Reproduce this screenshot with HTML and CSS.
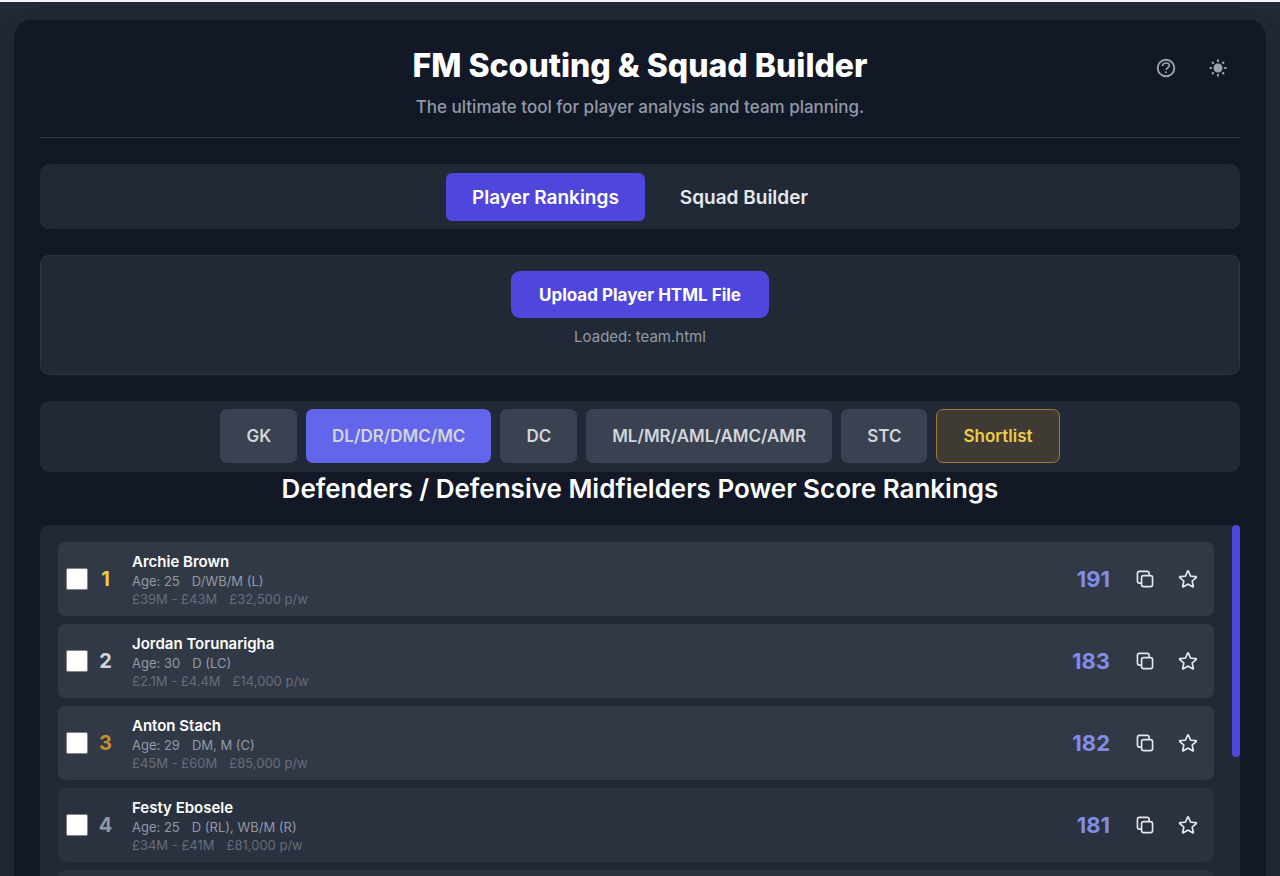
FILE: index.html
```html
<!DOCTYPE html>
<html lang="en">
  <head>
    <meta charset="UTF-8" />
    <meta name="viewport" content="width=device-width, initial-scale=1.0" />
    <title>FM Scouting & Squad Builder</title>
    <link rel="stylesheet" href="styles.css">
  </head>
  <body>
    <svg class="sprite" aria-hidden="true">
      <symbol id="icon-copy" viewBox="0 0 24 24">
        <path d="M16.5 8.25V6a2.25 2.25 0 00-2.25-2.25H6A2.25 2.25 0 003.75 6v8.25A2.25 2.25 0 006 16.5h2.25m8.25-8.25H18a2.25 2.25 0 012.25 2.25V18A2.25 2.25 0 0118 20.25h-7.5A2.25 2.25 0 018.25 18v-1.5m8.25-8.25h-6a2.25 2.25 0 00-2.25 2.25v6" />
      </symbol>
      <symbol id="icon-star" viewBox="0 0 24 24">
        <path d="M11.48 3.499a.562.562 0 011.04 0l2.125 5.111a.563.563 0 00.475.345l5.518.442c.499.04.701.663.321.988l-4.204 3.602a.563.563 0 00-.182.557l1.285 5.385a.562.562 0 01-.84.61l-4.725-2.885a.563.563 0 00-.586 0L6.982 20.54a.562.562 0 01-.84-.61l1.285-5.386a.562.562 0 00-.182-.557l-4.204-3.602a.563.563 0 01.321-.988l5.518-.442a.563.563 0 00.475-.345L11.48 3.5z" />
      </symbol>
    </svg>

    <div class="container">
      <header class="header">
        <div class="header-text">
          <h1>FM Scouting &amp; Squad Builder</h1>
          <p>The ultimate tool for player analysis and team planning.</p>
        </div>
        <div class="header-actions">
          <button type="button" class="round-btn" aria-label="Help">
            <svg viewBox="0 0 22 22" fill="none" stroke="currentColor" stroke-width="1.9">
              <circle cx="11" cy="11" r="8.3" />
              <path d="M7.5 9c.2-2 1.6-3 3.5-3 2 0 3.4 1 3.4 2.6 0 2.2-3.3 2.1-3.3 4.4" stroke-width="1.6" />
              <circle cx="11" cy="15.3" r="1" fill="currentColor" stroke="none" />
            </svg>
          </button>
          <button type="button" class="round-btn" aria-label="Toggle theme">
            <svg viewBox="0 0 22 22" fill="none" stroke="currentColor" stroke-width="2.1" stroke-linecap="round">
              <circle cx="11" cy="11" r="4.5" fill="currentColor" stroke="none" />
              <path d="M11 3.3v.8M11 17.9v.8M3.3 11h.8M17.9 11h.8M5.6 5.6l.5.5M15.9 15.9l.5.5M5.6 16.4l.5-.5M15.9 6.1l.5-.5" />
            </svg>
          </button>
        </div>
      </header>

      <nav class="tabs">
        <button type="button" class="tab active">Player Rankings</button>
        <button type="button" class="tab">Squad Builder</button>
      </nav>

      <section class="upload">
        <button type="button" class="upload-btn">Upload Player HTML File</button>
        <p>Loaded: team.html</p>
      </section>

      <div class="filters">
        <button type="button" class="filter">GK</button>
        <button type="button" class="filter active">DL/DR/DMC/MC</button>
        <button type="button" class="filter">DC</button>
        <button type="button" class="filter">ML/MR/AML/AMC/AMR</button>
        <button type="button" class="filter">STC</button>
        <button type="button" class="filter shortlist">Shortlist</button>
      </div>

      <h2>Defenders / Defensive Midfielders Power Score Rankings</h2>

      <div class="list-panel">
        <ol class="player-list">
          <li class="player top">
            <input type="checkbox" aria-label="Select Archie Brown" />
            <span class="rank gold">1</span>
            <div class="info">
              <h3>Archie Brown</h3>
              <p><span>Age: 25</span><span>D/WB/M (L)</span></p>
              <p class="value"><span>£39M - £43M</span><span>£32,500 p/w</span></p>
            </div>
            <span class="score">191</span>
            <button type="button" class="icon-btn" aria-label="Copy"><svg><use href="#icon-copy" /></svg></button>
            <button type="button" class="icon-btn" aria-label="Add to shortlist"><svg><use href="#icon-star" /></svg></button>
          </li>
          <li class="player top">
            <input type="checkbox" aria-label="Select Jordan Torunarigha" />
            <span class="rank silver">2</span>
            <div class="info">
              <h3>Jordan Torunarigha</h3>
              <p><span>Age: 30</span><span>D (LC)</span></p>
              <p class="value"><span>£2.1M - £4.4M</span><span>£14,000 p/w</span></p>
            </div>
            <span class="score">183</span>
            <button type="button" class="icon-btn" aria-label="Copy"><svg><use href="#icon-copy" /></svg></button>
            <button type="button" class="icon-btn" aria-label="Add to shortlist"><svg><use href="#icon-star" /></svg></button>
          </li>
          <li class="player top">
            <input type="checkbox" aria-label="Select Anton Stach" />
            <span class="rank bronze">3</span>
            <div class="info">
              <h3>Anton Stach</h3>
              <p><span>Age: 29</span><span>DM, M (C)</span></p>
              <p class="value"><span>£45M - £60M</span><span>£85,000 p/w</span></p>
            </div>
            <span class="score">182</span>
            <button type="button" class="icon-btn" aria-label="Copy"><svg><use href="#icon-copy" /></svg></button>
            <button type="button" class="icon-btn" aria-label="Add to shortlist"><svg><use href="#icon-star" /></svg></button>
          </li>
          <li class="player">
            <input type="checkbox" aria-label="Select Festy Ebosele" />
            <span class="rank">4</span>
            <div class="info">
              <h3>Festy Ebosele</h3>
              <p><span>Age: 25</span><span>D (RL), WB/M (R)</span></p>
              <p class="value"><span>£34M - £41M</span><span>£81,000 p/w</span></p>
            </div>
            <span class="score">181</span>
            <button type="button" class="icon-btn" aria-label="Copy"><svg><use href="#icon-copy" /></svg></button>
            <button type="button" class="icon-btn" aria-label="Add to shortlist"><svg><use href="#icon-star" /></svg></button>
          </li>
          <li class="player"></li>
        </ol>
        <div class="scroll-thumb"></div>
      </div>
    </div>
  </body>
</html>
```
FILE: styles.css
```css
* {
  box-sizing: border-box;
  margin: 0;
  padding: 0;
}
body {
  height: 100vh;
  overflow: hidden;
  padding: 18px 14px;
  border-top: 2px solid #f4f4f6;
  background: #212936;
  color: #fff;
  font-family: "Inter", sans-serif;
}
button {
  border: none;
  font-family: inherit;
  cursor: pointer;
}
.sprite {
  display: none;
}
.container {
  padding: 26px;
  border-radius: 17px;
  background: #121826;
  box-shadow: 0 8px 24px rgba(0, 0, 0, 0.1);
}

/* header */
.header {
  display: grid;
  grid-template-columns: 1fr auto 1fr;
  padding-bottom: 17px;
  margin-bottom: 26px;
  border-bottom: 1px solid #323845;
  text-align: center;
}
.header-text {
  grid-column: 2;
}
h1 {
  margin-bottom: 9px;
  font-size: 32px;
  line-height: 39px;
  font-weight: 800;
}
.header p {
  color: #9199a6;
  font-size: 17px;
  line-height: 26px;
  font-weight: 500;
}
.header-actions {
  display: flex;
  justify-content: flex-end;
  align-items: flex-start;
  gap: 8px;
}
.round-btn {
  display: flex;
  align-items: center;
  justify-content: center;
  width: 44px;
  height: 44px;
  border-radius: 50%;
  background: none;
  color: #9ca3af;
}
.round-btn svg {
  width: 22px;
  height: 22px;
}

/* tabs */
.tabs,
.filters {
  display: flex;
  justify-content: center;
  gap: 9px;
  border-radius: 9px;
  background: #212936;
}
.tabs {
  padding: 9px 8px 8px;
  margin-bottom: 26px;
}
.tab {
  height: 48px;
  padding: 0 26px;
  border-radius: 6px;
  background: none;
  color: #e5e7eb;
  font-size: 19px;
  font-weight: 600;
}
.tab.active {
  background: #4f46dc;
  color: #fff;
}

/* upload */
.upload {
  min-height: 120px;
  padding: 15px;
  margin-bottom: 26px;
  border: 1px solid #2f3643;
  border-radius: 9px;
  background: #212936;
  text-align: center;
}
.upload-btn {
  height: 47px;
  padding: 0 28px;
  margin-bottom: 9px;
  border-radius: 9px;
  background: #4f46dc;
  color: #fff;
  font-size: 17px;
  font-weight: 700;
}
.upload p {
  color: #9199a6;
  font-size: 15px;
  line-height: 20px;
}

/* position filters */
.filters {
  padding: 8px 8px 9px;
}
.filter {
  height: 54px;
  padding: 0 26px;
  border-radius: 7px;
  background: #3a4150;
  color: #d1d5db;
  font-size: 17px;
  font-weight: 600;
}
.filter.active {
  background: #6366ea;
}
.filter.shortlist {
  border: 1px solid #9b7c36;
  background: #403a34;
  color: #eacb4c;
}

h2 {
  margin-bottom: 19px;
  font-size: 26px;
  line-height: 34px;
  font-weight: 600;
  text-align: center;
}

/* rankings */
.list-panel {
  display: flex;
  align-items: flex-start;
  border-radius: 9px;
  background: #212936;
}
.player-list {
  flex: 1;
  padding: 17px 18px;
  list-style: none;
}
.scroll-thumb {
  width: 8px;
  height: 232px;
  border-radius: 4px;
  background: #4f46dc;
}
.player {
  display: flex;
  align-items: center;
  height: 74px;
  padding: 0 9px 0 8px;
  margin-bottom: 8px;
  border-radius: 7px;
  background: #2a313f;
}
.player.top {
  background: #323946;
}
.player input {
  appearance: none;
  width: 22px;
  height: 22px;
  border: 1px solid #858585;
  border-radius: 2px;
  background: #fff;
}
.rank {
  width: 35px;
  color: #9199a6;
  font-size: 20px;
  font-weight: 700;
  text-align: center;
}
.rank.gold {
  color: #eacb4c;
}
.rank.silver {
  color: #d1d5db;
}
.rank.bronze {
  color: #c48f33;
}
.info {
  flex: 1;
  margin-left: 9px;
}
.info h3 {
  font-size: 15px;
  line-height: 21px;
  font-weight: 600;
}
.info p {
  display: flex;
  gap: 12px;
  color: #9199a6;
  font-size: 13px;
  line-height: 18px;
}
.info .value {
  color: #666d7a;
}
.score {
  margin-right: 17px;
  color: #818ce8;
  font-size: 22px;
  font-weight: 700;
}
.icon-btn {
  display: flex;
  align-items: center;
  justify-content: center;
  width: 35px;
  height: 35px;
  background: none;
  color: #e5e7eb;
}
.icon-btn + .icon-btn {
  margin-left: 8px;
}
.icon-btn svg {
  width: 22px;
  height: 22px;
  fill: none;
  stroke: currentColor;
  stroke-width: 1.8;
  stroke-linecap: round;
  stroke-linejoin: round;
}
```
